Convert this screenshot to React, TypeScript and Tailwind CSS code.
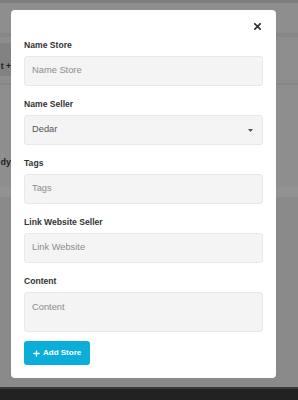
import { Plus } from 'lucide-react'

const font = { fontFamily: '"Liberation Sans", Arial, sans-serif' }

function Field({ label, children }: { label: string; children: React.ReactNode }) {
  return (
    <div className="mb-[12px]">
      <div className="mb-[5px] text-[8.6px] leading-[12px] font-bold text-[#333]">{label}</div>
      {children}
    </div>
  )
}

function Input({ placeholder }: { placeholder: string }) {
  return (
    <div className="flex h-[30px] items-center rounded-[3px] border border-[#e8e8e8] bg-[#f4f4f4] px-[7px] text-[9.3px] text-[#8c8c8c]">
      {placeholder}
    </div>
  )
}

export default function App() {
  return (
    <div className="relative h-[400px] w-[298px] overflow-hidden bg-[#8a8a8a]" style={font}>
      {/* page behind the overlay */}
      <div className="flex h-full flex-col">
        <div className="h-[3px] bg-[#7e7e7e]" />
        <div className="h-[30px] bg-[#8e8e8e]" />
        <div className="h-[4px] bg-[#878787]" />
        <div className="flex h-[46px] flex-col bg-[#8d8d8d]">
          <div className="h-[6px]" />
          <div className="flex h-[33px] w-[11px] items-end justify-end overflow-hidden whitespace-nowrap bg-[#828282] pb-[3px] text-[8.6px] font-bold text-[#1e1e1e]">
            t +
          </div>
        </div>
        <div className="h-[2px] bg-[#868686]" />
        <div className="flex h-[101px] items-end bg-[#8e8e8e] pb-[17px]">
          <div className="flex w-[11px] justify-end overflow-hidden whitespace-nowrap text-[9px] font-bold text-[#1e1e1e]">
            dy
          </div>
        </div>
        <div className="h-[11px] bg-[#929292]" />
        <div className="flex-1 bg-[#8a8a8a]" />
        <div className="h-[2px] bg-[#3a3a3a]" />
        <div className="h-[11px] bg-[#222]" />
      </div>

      {/* modal */}
      <div className="absolute left-[11px] top-[10px] w-[265px] rounded-[4px] bg-white px-[13px] pb-[13px]">
        <div className="flex h-[29px] justify-end pt-[13px]">
          <svg width="7" height="7" viewBox="0 0 7 7" className="mr-[2px]">
            <path d="M0.8 0.8 L6.2 6.2 M6.2 0.8 L0.8 6.2" stroke="#333" strokeWidth="1.7" strokeLinecap="square" />
          </svg>
        </div>

        <Field label="Name Store">
          <Input placeholder="Name Store" />
        </Field>

        <Field label="Name Seller">
          <div className="flex h-[30px] items-center justify-between rounded-[3px] border border-[#e8e8e8] bg-[#f4f4f4] pl-[7px] pr-[9px] text-[9.3px] text-[#555]">
            <span>Dedar</span>
            <svg width="5" height="3" viewBox="0 0 5 3">
              <path d="M0 0 L5 0 L2.5 3 Z" fill="#555" />
            </svg>
          </div>
        </Field>

        <Field label="Tags">
          <Input placeholder="Tags" />
        </Field>

        <Field label="Link Website Seller">
          <Input placeholder="Link Website" />
        </Field>

        <div className="mb-[9px]">
          <div className="mb-[5px] text-[8.6px] leading-[12px] font-bold text-[#333]">Content</div>
          <div className="h-[40px] rounded-[3px] border border-[#e8e8e8] bg-[#f4f4f4] px-[7px] pt-[8px] text-[9.3px] leading-[12px] text-[#8c8c8c]">
            Content
          </div>
        </div>

        <button className="flex h-[24px] w-[66px] items-center gap-[2px] rounded-[3px] bg-[#0aaed8] pl-[8px] text-[8px] font-bold text-white">
          <Plus size={9} strokeWidth={3.4} />
          Add Store
        </button>
      </div>
    </div>
  )
}
